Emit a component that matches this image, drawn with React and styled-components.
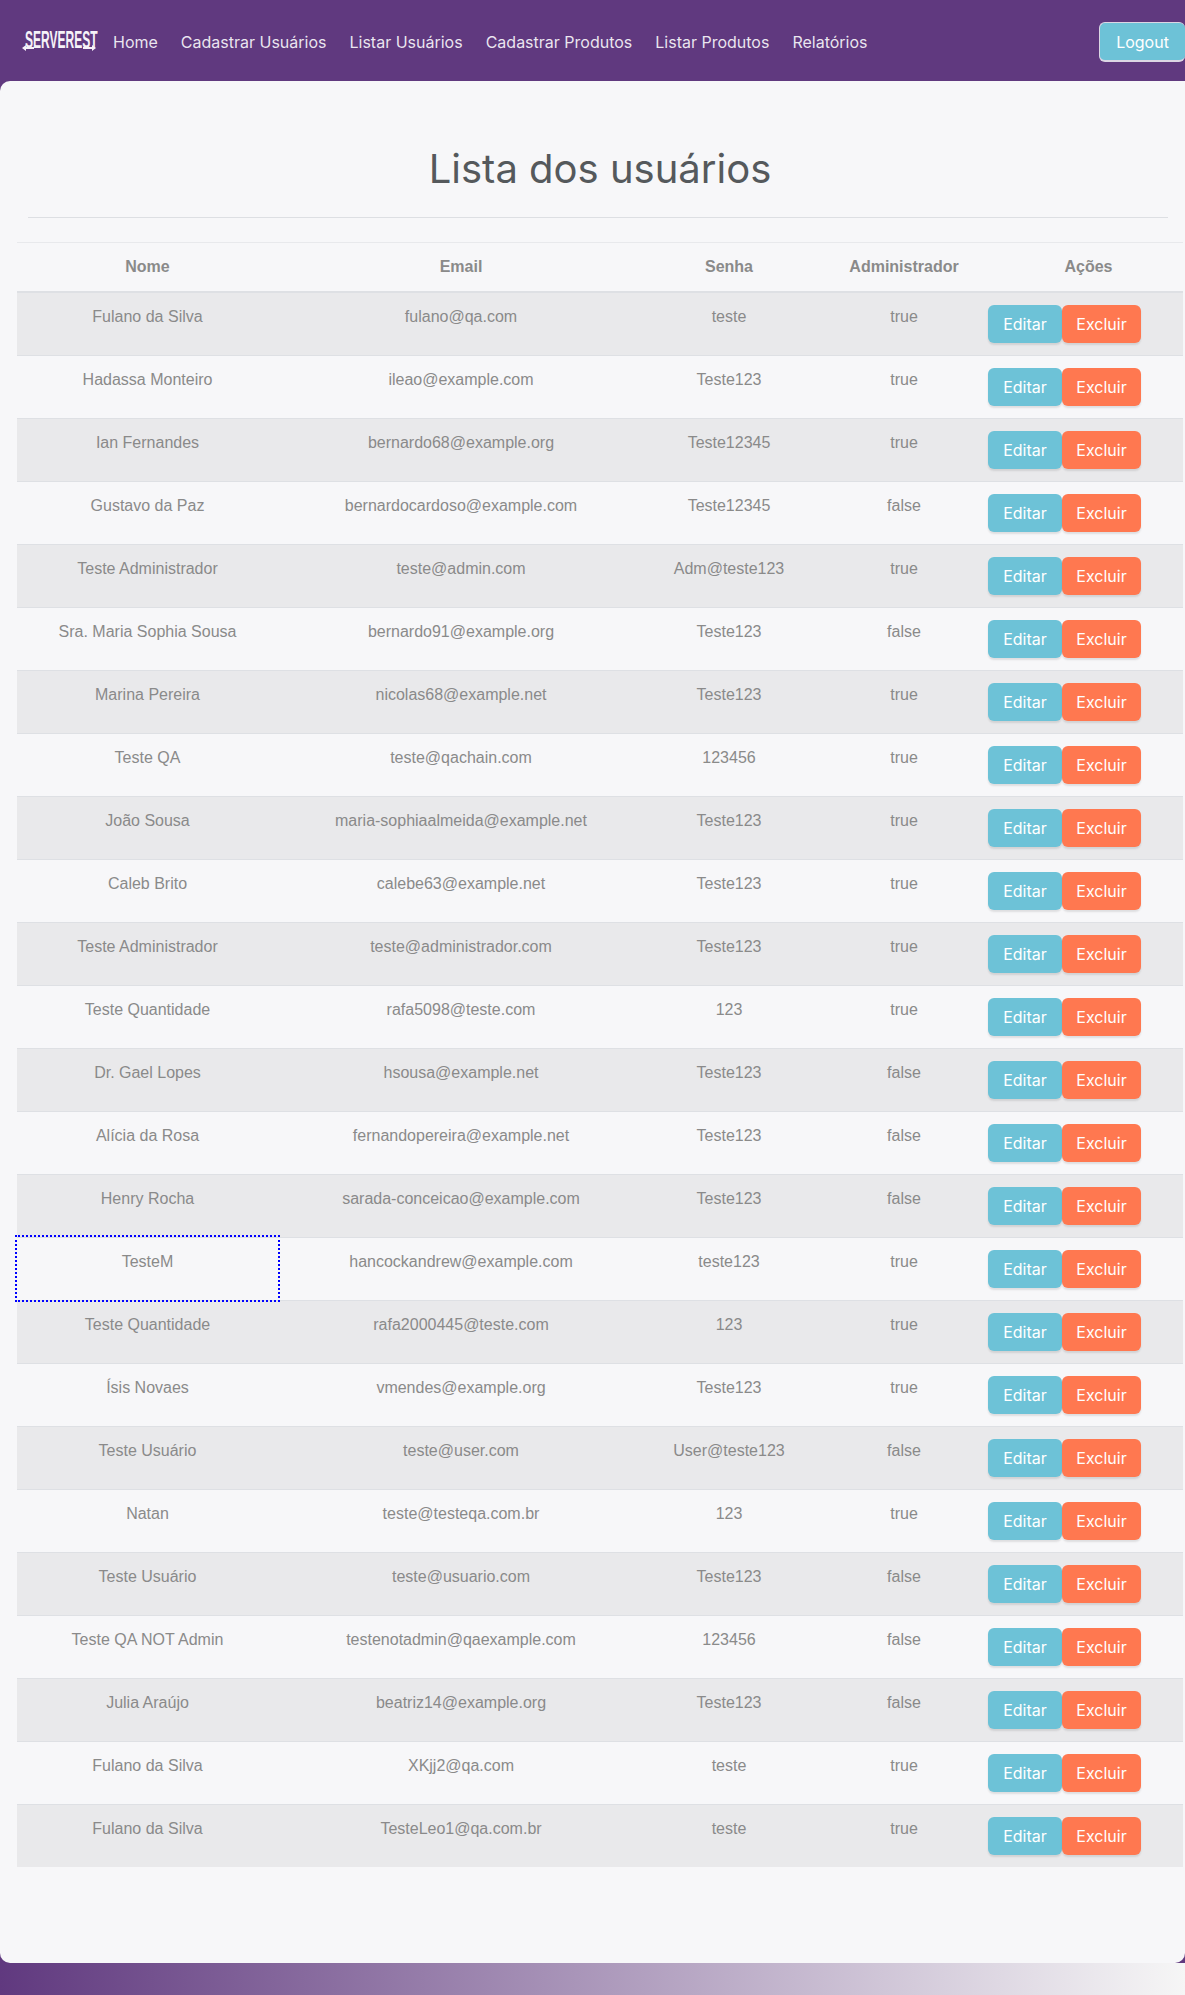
import React from 'react'
import styled, { createGlobalStyle } from 'styled-components'

const users = [
  ['Fulano da Silva', 'fulano@qa.com', 'teste', 'true'],
  ['Hadassa Monteiro', 'ileao@example.com', 'Teste123', 'true'],
  ['Ian Fernandes', 'bernardo68@example.org', 'Teste12345', 'true'],
  ['Gustavo da Paz', 'bernardocardoso@example.com', 'Teste12345', 'false'],
  ['Teste Administrador', 'teste@admin.com', 'Adm@teste123', 'true'],
  ['Sra. Maria Sophia Sousa', 'bernardo91@example.org', 'Teste123', 'false'],
  ['Marina Pereira', 'nicolas68@example.net', 'Teste123', 'true'],
  ['Teste QA', 'teste@qachain.com', '123456', 'true'],
  ['João Sousa', 'maria-sophiaalmeida@example.net', 'Teste123', 'true'],
  ['Caleb Brito', 'calebe63@example.net', 'Teste123', 'true'],
  ['Teste Administrador', 'teste@administrador.com', 'Teste123', 'true'],
  ['Teste Quantidade', 'rafa5098@teste.com', '123', 'true'],
  ['Dr. Gael Lopes', 'hsousa@example.net', 'Teste123', 'false'],
  ['Alícia da Rosa', 'fernandopereira@example.net', 'Teste123', 'false'],
  ['Henry Rocha', 'sarada-conceicao@example.com', 'Teste123', 'false'],
  ['TesteM', 'hancockandrew@example.com', 'teste123', 'true'],
  ['Teste Quantidade', 'rafa2000445@teste.com', '123', 'true'],
  ['Ísis Novaes', 'vmendes@example.org', 'Teste123', 'true'],
  ['Teste Usuário', 'teste@user.com', 'User@teste123', 'false'],
  ['Natan', 'teste@testeqa.com.br', '123', 'true'],
  ['Teste Usuário', 'teste@usuario.com', 'Teste123', 'false'],
  ['Teste QA NOT Admin', 'testenotadmin@qaexample.com', '123456', 'false'],
  ['Julia Araújo', 'beatriz14@example.org', 'Teste123', 'false'],
  ['Fulano da Silva', 'XKjj2@qa.com', 'teste', 'true'],
  ['Fulano da Silva', 'TesteLeo1@qa.com.br', 'teste', 'true'],
]

const navLinks = ['Home', 'Cadastrar Usuários', 'Listar Usuários', 'Cadastrar Produtos', 'Listar Produtos', 'Relatórios']

const GlobalStyle = createGlobalStyle`
  html, body {
    margin: 0;
    padding: 0;
    background: #60397f;
  }
  * {
    box-sizing: border-box;
  }
`

const Page = styled.div`
  width: 1185px;
  height: 1995px;
  display: flex;
  flex-direction: column;
  background: #60397f;
  overflow: hidden;
`

const Navbar = styled.nav`
  height: 81px;
  flex: none;
  display: flex;
  align-items: flex-start;
  padding: 22px 0 0 22px;
  background: #60397f;
`

const Logo = styled.div`
  position: relative;
  width: 74px;
  height: 24px;
  margin: 6px 17px 0 0;
  flex: none;
`

const LogoText = styled.span`
  display: block;
  font-family: 'Liberation Sans', Arial, sans-serif;
  font-size: 24px;
  line-height: 24px;
  font-weight: 700;
  color: #f6f2f8;
  white-space: nowrap;
  transform: scaleX(0.5);
  transform-origin: left center;
  margin-left: 3px;
`

const LogoArrows = styled.svg`
  position: absolute;
  left: 0;
  top: 16px;
`

const NavLinks = styled.div`
  display: flex;
  gap: 23px;
  padding-top: 8px;
`

const NavLink = styled.a`
  font-family: Inter, 'Open Sans', sans-serif;
  font-size: 16px;
  line-height: 24px;
  color: rgba(255, 255, 255, 0.88);
  white-space: nowrap;
`

const LogoutButton = styled.button`
  margin-left: auto;
  width: 86px;
  height: 40px;
  border: 1px solid #dcd6e4;
  border-bottom-width: 2px;
  border-right: 0;
  border-radius: 6px;
  background: #6dc2d7;
  color: #fff;
  font-family: Inter, 'Open Sans', sans-serif;
  font-size: 16px;
`

const Content = styled.main`
  flex: 1;
  background: #f7f7f9;
  border-radius: 10px 0 10px 0;
  border-bottom-left-radius: 10px;
  padding: 60px 2px 0 17px;
`

const Title = styled.h1`
  margin: 0;
  font-family: Inter, 'Open Sans', sans-serif;
  font-size: 40px;
  line-height: 56px;
  font-weight: 400;
  color: #55595c;
  text-align: center;
`

const Divider = styled.hr`
  margin: 20px 15px 24px 11px;
  border: 0;
  border-top: 1px solid #dddfe3;
`

const Table = styled.table`
  width: 1166px;
  table-layout: fixed;
  border-collapse: collapse;
  font-family: 'Liberation Sans', Arial, sans-serif;
  font-size: 16px;
  line-height: 24px;
  color: #8a8a8a;
`

const HeadCell = styled.th`
  height: 49px;
  padding: 12px;
  border-top: 1px solid #e8e9ec;
  border-bottom: 2px solid #dee0e4;
  font-weight: 700;
  text-align: center;
`

const Row = styled.tr`
  height: 63px;
  background: ${(p) => (p.$striped ? '#e9e9eb' : 'transparent')};
  border-top: 1px solid #dee0e4;
`

const Cell = styled.td`
  padding: 12px;
  vertical-align: top;
  text-align: center;
  white-space: nowrap;
  outline: ${(p) => (p.$focused ? '2px dotted #0000ff' : 'none')};
`

const ActionsCell = styled.td`
  padding: 12px 0 0;
  vertical-align: top;
`

const Actions = styled.div`
  display: flex;
  margin-left: -6px;
`

const ActionButton = styled.button`
  height: 38px;
  padding: 0 12px;
  border: 0;
  border-radius: 6px;
  background: ${(p) => (p.$danger ? '#ff7850' : '#6dc2d7')};
  box-shadow: 0 2px 2px rgba(0, 0, 0, 0.1);
  color: #fff;
  font-family: Inter, 'Open Sans', sans-serif;
  font-size: 16px;
  width: ${(p) => (p.$danger ? '79px' : '74px')};
`

const Footer = styled.footer`
  height: 32px;
  flex: none;
  background: linear-gradient(90deg, #60397f, #f6f6f6);
`

const columns = [
  ['Nome', 261],
  ['Email', 366],
  ['Senha', 170],
  ['Administrador', 180],
  ['Ações', 189],
]

export default function App() {
  return (
    <Page>
      <GlobalStyle />
      <Navbar>
        <Logo>
          <LogoText>SERVEREST</LogoText>
          <LogoArrows width="74" height="8" viewBox="0 0 74 8" fill="#f6f2f8">
            <path d="M0 4 4 1v2h8v2H4v2zM74 4l-4-3v2h-9v2h9v2z" />
          </LogoArrows>
        </Logo>
        <NavLinks>
          {navLinks.map((link) => (
            <NavLink key={link}>{link}</NavLink>
          ))}
        </NavLinks>
        <LogoutButton>Logout</LogoutButton>
      </Navbar>
      <Content>
        <Title>Lista dos usuários</Title>
        <Divider />
        <Table>
          <colgroup>
            {columns.map(([name, width]) => (
              <col key={name} width={width} />
            ))}
          </colgroup>
          <thead>
            <tr>
              {columns.map(([name]) => (
                <HeadCell key={name}>{name}</HeadCell>
              ))}
            </tr>
          </thead>
          <tbody>
            {users.map((user, i) => (
              <Row key={user[1]} $striped={i % 2 === 0}>
                <Cell $focused={i === 15}>{user[0]}</Cell>
                <Cell>{user[1]}</Cell>
                <Cell>{user[2]}</Cell>
                <Cell>{user[3]}</Cell>
                <ActionsCell>
                  <Actions>
                    <ActionButton>Editar</ActionButton>
                    <ActionButton $danger>Excluir</ActionButton>
                  </Actions>
                </ActionsCell>
              </Row>
            ))}
          </tbody>
        </Table>
      </Content>
      <Footer />
    </Page>
  )
}
